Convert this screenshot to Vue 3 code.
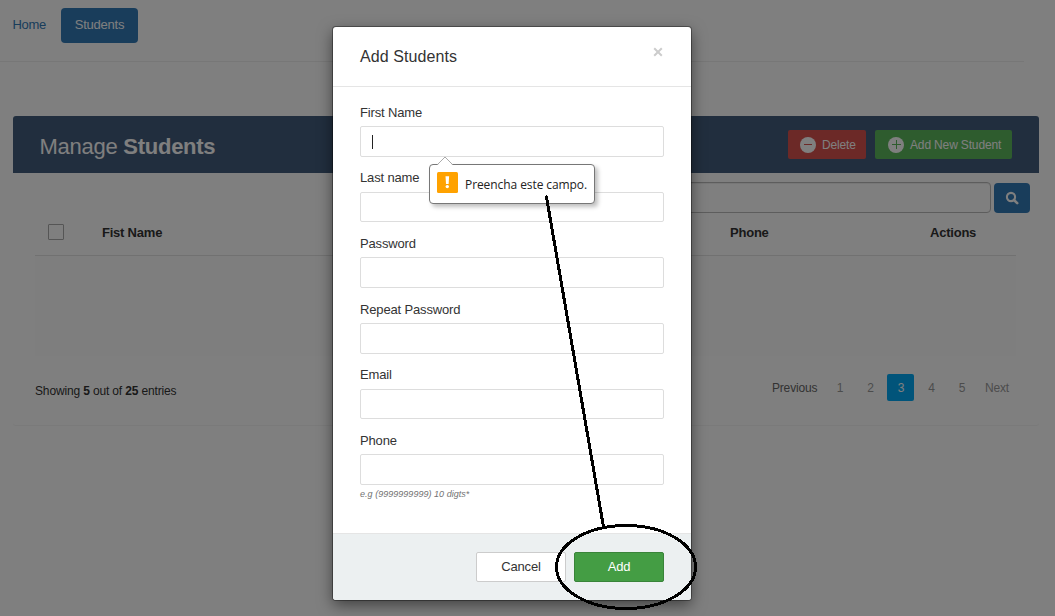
<script setup>
import { ref } from 'vue'

const fields = ref([
  { id: 'first', label: 'First Name', focused: true },
  { id: 'last', label: 'Last name' },
  { id: 'password', label: 'Password' },
  { id: 'repeat', label: 'Repeat Password' },
  { id: 'email', label: 'Email' },
  { id: 'phone', label: 'Phone' },
])
const pages = [1, 2, 3, 4, 5]
const current = 3
</script>

<template>
  <div class="screen">
    <div class="page">
      <nav class="nav">
        <a class="home">Home</a>
        <a class="tab">Students</a>
      </nav>

      <section class="wrapper">
        <header class="title-bar">
          <h2>Manage <b>Students</b></h2>
          <div class="actions">
            <button class="btn delete">
              <svg width="16" height="16" viewBox="0 0 16 16"><circle cx="8" cy="8" r="8" fill="#fff" /><path d="M4 7.5h8" stroke="#d9534f" /></svg>
              <span>Delete</span>
            </button>
            <button class="btn add-new">
              <svg width="16" height="16" viewBox="0 0 16 16"><circle cx="8" cy="8" r="8" fill="#fff" /><path d="M4 7.5h9M8.5 3v9" stroke="#5cb85c" /></svg>
              <span>Add New Student</span>
            </button>
          </div>
        </header>
        <div class="search">
          <div class="search-input"></div>
          <button class="search-btn">
            <svg width="14" height="14" viewBox="0 0 14 14" fill="none" stroke="#fff"><circle cx="6" cy="6" r="4.1" stroke-width="2.1" /><path d="M9 9l3.2 3.2" stroke-width="2.6" stroke-linecap="round" /></svg>
          </button>
        </div>
        <div class="table">
          <div class="thead">
            <span class="check"></span>
            <span>Fist Name</span>
            <span>Phone</span>
            <span>Actions</span>
          </div>
          <div class="tbody"></div>
        </div>
        <footer class="foot">
          <span class="count">Showing <b>5</b> out of <b>25</b> entries</span>
          <div class="pagination">
            <a class="prev">Previous</a>
            <a v-for="p in pages" :key="p" class="num" :class="{ active: p === current }">{{ p }}</a>
            <a class="next">Next</a>
          </div>
        </footer>
      </section>
    </div>

    <div class="backdrop">
      <div class="modal">
        <header class="modal-head">
          <h4>Add Students</h4>
          <svg class="close" width="10" height="10" viewBox="0 0 10 10"><path d="M1.2 1.2l7.6 7.6M8.8 1.2l-7.6 7.6" stroke="#ccc" stroke-width="2" /></svg>
        </header>
        <div class="modal-body">
          <div v-for="f in fields" :key="f.id" class="group">
            <label>{{ f.label }}</label>
            <div class="control"><i v-if="f.focused" class="caret"></i></div>
          </div>
          <small class="hint">e.g (9999999999) 10 digts*</small>
        </div>
        <footer class="modal-foot">
          <button class="cancel">Cancel</button>
          <button class="add">Add</button>
        </footer>
      </div>
    </div>

    <div class="tooltip">
      <svg class="arrow" width="18" height="9" viewBox="0 0 18 9"><path d="M1.5 9L9 1l7.5 8z" fill="#fff" /><path d="M1.5 8.5L9 1l7.5 7.5" fill="none" stroke="#aaa" /></svg>
      <svg width="21" height="21" viewBox="0 0 21 21"><rect width="21" height="21" rx="1.5" fill="#ffa200" /><path d="M8.5 4.2h3.6l-.5 7.8H9z" fill="#fff" /><circle cx="10.3" cy="14.6" r="1.7" fill="#fff" /></svg>
      <span>Preencha este campo.</span>
    </div>

    <svg class="annotation" width="1055" height="616" viewBox="0 0 1055 616" fill="none" stroke="#000" stroke-width="3" shape-rendering="crispEdges">
      <path d="M546.5 197L603.5 527" stroke-linecap="round" />
      <ellipse cx="626" cy="567" rx="69.5" ry="41.5" />
    </svg>
  </div>
</template>

<style>
html, body { margin: 0; overflow: hidden; }
</style>

<style scoped>
* { box-sizing: border-box; }
.screen {
  position: relative;
  width: 1055px;
  height: 616px;
  overflow: hidden;
  background: #fff;
  color: #333;
  font: 13px/18px "Liberation Sans", Arial, sans-serif;
  letter-spacing: -.15px;
}
button { font: inherit; letter-spacing: inherit; padding: 0; margin: 0; border: 0; }
.nav {
  display: flex;
  align-items: center;
  width: 1024px;
  height: 62px;
  padding: 8px 0 18px 12.5px;
  border-bottom: 1px solid #eee;
  color: #337ab7;
}
.home { width: 48.5px; line-height: 34px; align-self: flex-start; letter-spacing: -.3px; }
.tab {
  width: 77px;
  height: 35px;
  line-height: 34px;
  text-align: center;
  letter-spacing: -.25px;
  color: #fff;
  background: #337ab7;
  border-radius: 4px;
}
.wrapper {
  width: 1026px;
  height: 309px;
  margin: 54px 0 0 13px;
  border-radius: 3px;
  box-shadow: 0 1px 1px rgba(0, 0, 0, .05);
}
.title-bar {
  display: flex;
  justify-content: space-between;
  align-items: center;
  height: 57px;
  padding: 0 27px 0 26.5px;
  color: #fff;
  background: #435d7d;
  border-radius: 3px 3px 0 0;
}
h2 { margin: 4px 0 0; font-size: 22px; line-height: 30px; font-weight: 400; letter-spacing: -.26px; }
.actions { display: flex; gap: 9px; }
.btn {
  display: flex;
  align-items: center;
  gap: 6px;
  height: 29px;
  padding-left: 12px;
  color: #fff;
  border-radius: 2px;
  font-size: 12px;
  white-space: nowrap;
}
.btn svg { flex: none; }
.delete { width: 78px; background: #d9534f; }
.add-new { width: 137px; padding-left: 13px; background: #5cb85c; }
.search { display: flex; gap: 3px; padding: 9px 9px 0 400px; align-items: flex-end; height: 40px; }
.search-input {
  flex: 1;
  height: 31px;
  border: 1px solid #bbb;
  border-radius: 4px;
  box-shadow: inset 0 1px 1px rgba(0, 0, 0, .075);
}
.search-btn {
  display: flex;
  align-items: center;
  justify-content: center;
  width: 36px;
  height: 30px;
  background: #337ab7;
  border-radius: 4px;
}
.table { margin: 0 23px 0 22px; }
.thead {
  display: grid;
  grid-template-columns: 54px 628px 200px 1fr;
  align-items: center;
  height: 43px;
  padding: 0 0 4px 13px;
  border-bottom: 1px solid #e2e2e2;
  font-weight: 700;
  letter-spacing: -.22px;
}
.thead span:not(.check) { padding-top: 2px; }
.check { width: 16px; height: 16px; border: 1px solid #aaa; border-radius: 1px; }
.tbody { height: 100px; background: #fcfcfc; }
.foot {
  display: flex;
  justify-content: space-between;
  align-items: flex-start;
  padding: 18px 30px 0 22px;
  font-size: 12px;
}
.count { line-height: 35px; }
.pagination { display: flex; height: 27px; line-height: 28px; color: #999; text-align: center; }
.prev { color: #666; margin-right: 9px; }
.num { width: 27px; margin-right: 3.5px; border-radius: 2px; }
.num.active { color: #fff; background: #03a9f4; }
.next { margin-left: 6px; }
.backdrop { position: absolute; inset: 0; background: rgba(0, 0, 0, .5); }
.modal {
  width: 358px;
  height: 573px;
  margin: 27px 0 0 333px;
  background: #fff;
  border-radius: 3px;
  box-shadow: 0 0 0 1px rgba(0, 0, 0, .35), 0 5px 15px rgba(0, 0, 0, .5);
}
.modal-head {
  display: flex;
  justify-content: space-between;
  height: 60px;
  padding: 20px 28px 0 27px;
  border-bottom: 1px solid #e5e5e5;
}
h4 { margin: 0; font-size: 16px; line-height: 20px; font-weight: 400; letter-spacing: .08px; }
.modal-body { height: 446px; padding: 15.8px 27px 0; }
.group { height: 65.6px; }
label { display: block; height: 23.4px; line-height: 20px; }
.control {
  height: 30.6px;
  padding: 8px 0 0 11px;
  border: 1px solid #ddd;
  border-radius: 2px;
}
.caret { display: block; width: 1px; height: 14px; background: #222; }
.hint { display: block; margin-top: -9.4px; color: #737373; font-size: 9px; line-height: 14px; font-style: italic; letter-spacing: .03px; }
.modal-foot {
  display: flex;
  justify-content: flex-end;
  gap: 8px;
  height: 67px;
  padding: 18px 27px 0;
  background: #ecf0f1;
  border-top: 1px solid #e5e5e5;
  border-radius: 0 0 3px 3px;
}
.modal-foot button { width: 90px; height: 30px; border-radius: 2px; line-height: 28px; }
.modal-foot .cancel { color: #333; background: #fff; border: 1px solid #ccc; }
.modal-foot .add { color: #fff; background: #449d44; border: 1px solid #398439; }
.tooltip {
  position: absolute;
  left: 429px;
  top: 164px;
  display: flex;
  align-items: center;
  gap: 7px;
  width: 166px;
  height: 40px;
  padding: 0 0 3px 7px;
  background: #fff;
  border: 1px solid #777;
  border-radius: 4px;
  box-shadow: 3px 3px 4px rgba(0, 0, 0, .25);
  color: #222;
  font: 12px/18px "Open Sans", "Noto Sans", sans-serif;
  white-space: nowrap;
}
.tooltip span { padding-top: 5px; letter-spacing: -.08px; }
.arrow { position: absolute; left: 6px; top: -9px; }
.annotation { position: absolute; inset: 0; }
</style>
